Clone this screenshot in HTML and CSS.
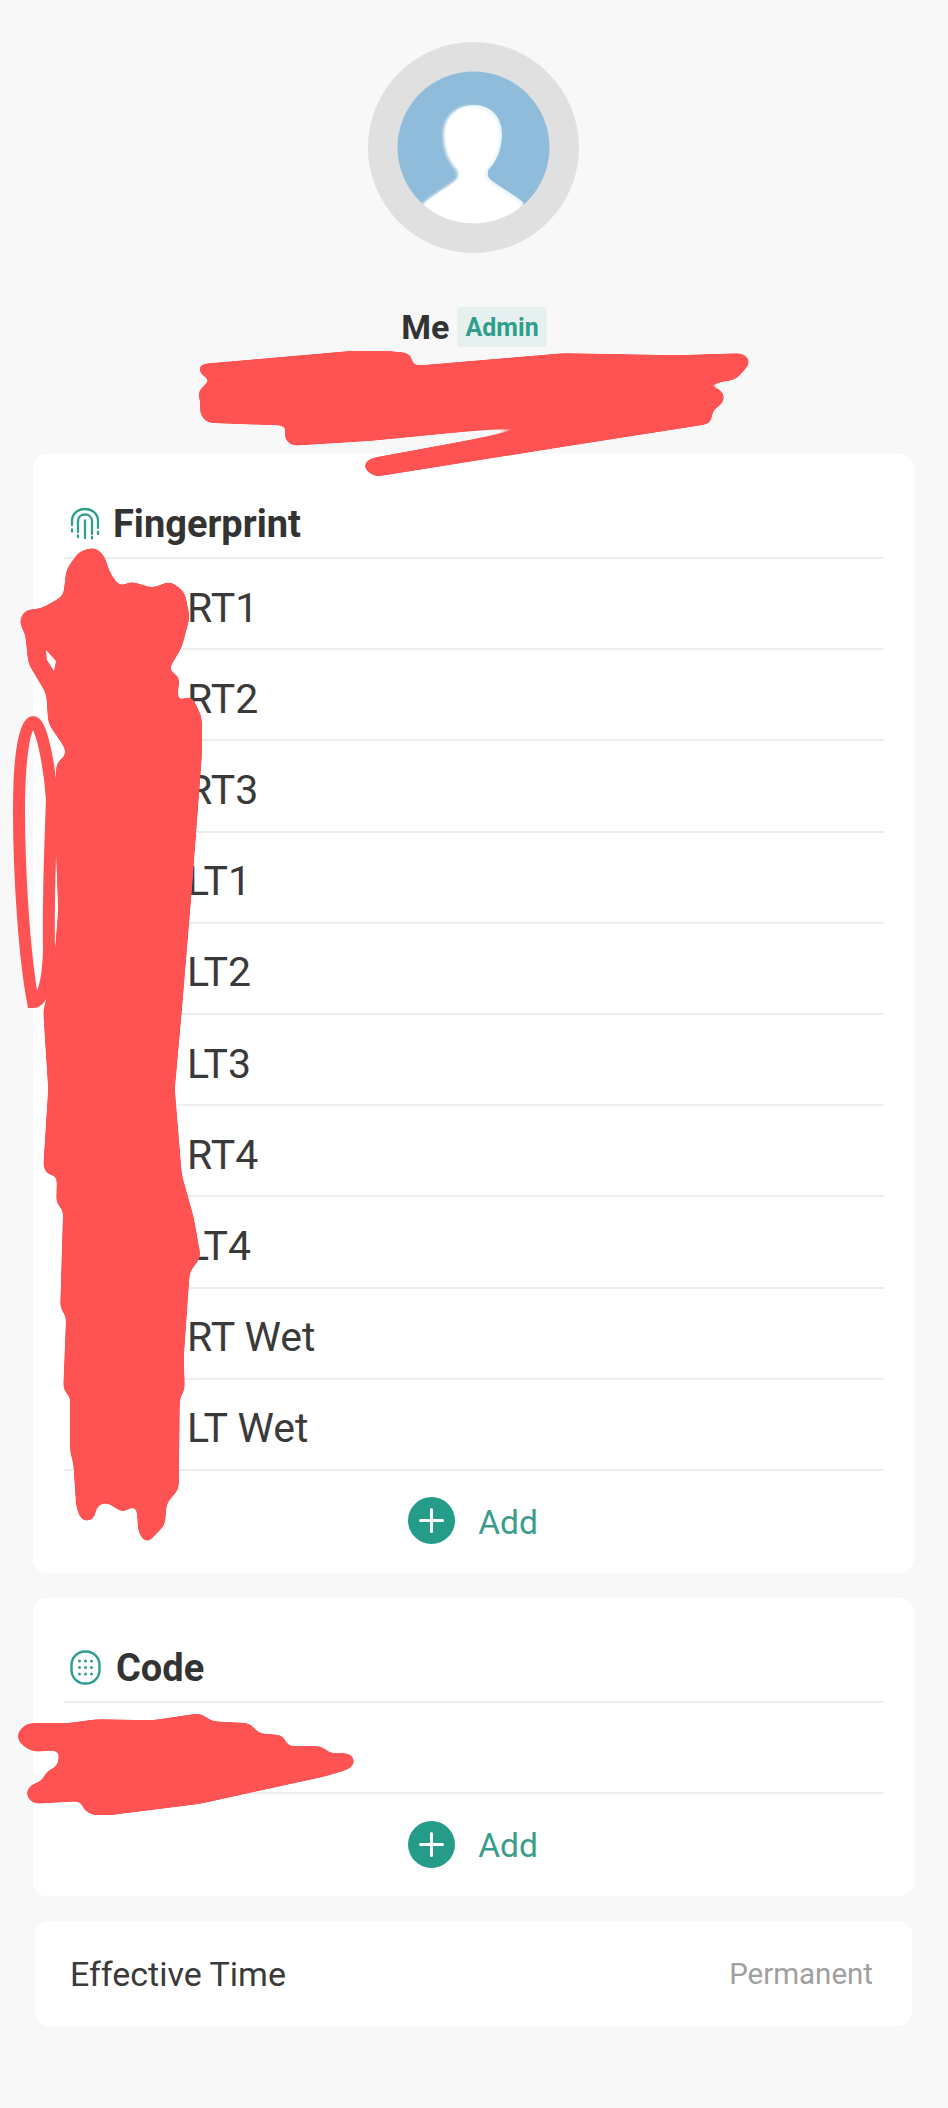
FILE: index.html
```html
<!DOCTYPE html>
<html lang="en">
<head>
    <meta charset="UTF-8">
    <meta name="viewport" content="width=device-width, initial-scale=1.0">
    <title>User Details</title>
    <link rel="stylesheet" href="styles.css">
</head>
<body>
    <div class="profile">
        <svg class="avatar" width="211" height="211" viewBox="0 0 211 211">
            <defs>
                <clipPath id="avatarClip"><circle cx="105.5" cy="105.5" r="76"/></clipPath>
                <filter id="soft"><feGaussianBlur stdDeviation="1.6"/></filter>
            </defs>
            <circle cx="105.5" cy="105.5" r="105.5" fill="#e0e0e0"/>
            <circle cx="105.5" cy="105.5" r="76" fill="#8fbcdb"/>
            <g clip-path="url(#avatarClip)">
                <path fill="#e4f2f5" d="M106 63C122 63 134 74 134 92C134 108 128 120 120 128V134C122 140 140 148 155 160L160 200H52L57 161C72 148 90 140 92 134V128C84 120 78 108 78 92C78 74 90 63 106 63Z"/>
                <path fill="#fff" filter="url(#soft)" transform="translate(-2.5 1)" d="M106 63C122 63 134 74 134 92C134 108 128 120 120 128V134C122 140 140 148 155 160L160 200H52L57 161C72 148 90 140 92 134V128C84 120 78 108 78 92C78 74 90 63 106 63Z"/>
            </g>
        </svg>
        <div class="name-line">
            <span class="name">Me</span>
            <span class="role-tag">Admin</span>
        </div>
    </div>

    <section class="card card-fingerprint">
        <div class="card-title">
            <svg class="title-icon" width="30" height="34" viewBox="0 0 30 34" fill="none" stroke="#2f9e8c" stroke-width="2.300" stroke-linecap="round">
                <path d="M2 18V14C2 6.500 8 2 15 2S28 6.500 28 14V21"/>
                <path d="M8 25V14C8 10 11 7.500 15 7.500S22 10 22 14V27"/>
                <path d="M15 13.500V31"/>
                <path d="M2 22.500V24.500M28 25V27M22 30V31.500M8 28.500V30"/>
            </svg>
            <span>Fingerprint</span>
        </div>
        <div class="row">RT1</div>
        <div class="row">RT2</div>
        <div class="row">RT3</div>
        <div class="row">LT1</div>
        <div class="row">LT2</div>
        <div class="row">LT3</div>
        <div class="row">RT4</div>
        <div class="row">LT4</div>
        <div class="row">RT Wet</div>
        <div class="row">LT Wet</div>
        <div class="add-row">
            <span class="add-circle"></span>
            <span class="add-text">Add</span>
        </div>
    </section>

    <section class="card card-code">
        <div class="card-title">
            <svg class="title-icon" width="31" height="35" viewBox="0 0 31 35">
                <rect x="1.500" y="1.500" width="28" height="32" rx="13.500" fill="none" stroke="#2f9e8c" stroke-width="2.400"/>
                <g fill="#2f9e8c">
                    <circle cx="9.500" cy="11" r="1.500"/><circle cx="15.500" cy="11" r="1.500"/><circle cx="21.500" cy="11" r="1.500"/>
                    <circle cx="9.500" cy="17.500" r="1.500"/><circle cx="15.500" cy="17.500" r="1.500"/><circle cx="21.500" cy="17.500" r="1.500"/>
                    <circle cx="9.500" cy="24" r="1.500"/><circle cx="15.500" cy="24" r="1.500"/><circle cx="21.500" cy="24" r="1.500"/>
                </g>
            </svg>
            <span>Code</span>
        </div>
        <div class="row"></div>
        <div class="add-row">
            <span class="add-circle"></span>
            <span class="add-text">Add</span>
        </div>
    </section>

    <section class="card card-time">
        <span class="time-label">Effective Time</span>
        <span class="time-value">Permanent</span>
    </section>

    <!-- red marker scribbles on top of the screenshot -->
    <svg class="scribbles" width="948" height="2108" viewBox="0 0 948 2108">
        <defs>
            <filter id="marker" x="0" y="0" width="100%" height="100%">
                <feGaussianBlur stdDeviation="4"/>
                <feColorMatrix values="1 0 0 0 0  0 1 0 0 0  0 0 1 0 0  0 0 0 16 -7"/>
            </filter>
        </defs>
        <g fill="#ff5252" stroke="#ff5252" stroke-width="3" stroke-linejoin="round" fill-rule="evenodd" filter="url(#marker)">
            <path d="M199 366L371 351L410 355V368L563 355L677 357L743 355L749 362L735 378L674 387L721 391L723 401L710 410V422L563 445L375 475L364 466L371 460L578 422L524 424L371 439L291 444L285 435L293 424L207 421L201 412L203 403L199 393L207 385L222 378L203 375Z"/>
            <path d="M68 570L80 553L95 549L103 557L108 573L120 590L130 583L153 590L170 583L183 593L188 617L180 647L165 672L162 693L168 673L178 677L170 740L180 703L190 697L200 717V757L190 890L180 1011L173 1089L180 1175L192 1218L199 1257L188 1271L182 1357L183 1391L178 1396L177 1489L165 1502L163 1525L155 1532L147 1542L140 1532L138 1500L123 1511L107 1500L95 1504L93 1518L83 1520L78 1507L75 1461L72 1454V1393L65 1391L68 1314L62 1309L65 1207L58 1204L59 1168L50 1175L45 1168L50 1089L45 1011L55 973L60 910L58 857L58 763L68 757L67 748L50 723L48 693L30 663L27 633L21 623L25 612L42 610L65 597Z"/>
            <path d="M18 1735L27 1725H67L97 1721L153 1722L200 1715L211 1723L250 1725L257 1735L283 1737L285 1748H322L328 1755H350L354 1763L347 1768L323 1775L200 1802L97 1815L83 1808L87 1799L33 1802L27 1793L32 1786L43 1783L48 1772L60 1768V1757L65 1748L33 1750L22 1743Z"/>
        </g>
        <path fill="#fff" d="M46 650L56 661L54 671L47 660Z"/>
        <path fill="none" stroke="#ff5252" stroke-width="12" d="M33 722C24 722 19 760 19 810C19 880 25 960 33 1002C42 1002 48 985 49 950C48 900 50 850 52 800C50 770 42 722 33 722Z"/>
    </svg>
</body>
</html>
```

FILE: styles.css
```css
body {
    font-family: 'Roboto', sans-serif;
    background: #f8f8f8;
    color: #333;
    margin: 0;
    height: 2108px;
    position: relative;
    overflow: hidden;
}
.profile {
    display: flex;
    flex-direction: column;
    align-items: center;
    padding-top: 42px;
    height: 454px;
    box-sizing: border-box;
}
.avatar {
    display: block;
    margin-left: -1px;
}
.name-line {
    display: flex;
    align-items: center;
    gap: 8px;
    margin-top: 54px;
    height: 40px;
}
.name {
    font-size: 34px;
    font-weight: 700;
}
.role-tag {
    background: #e6f1ef;
    color: #2f9e8c;
    font-size: 25px;
    font-weight: 700;
    padding: 0 8px;
    height: 40px;
    line-height: 42px;
    border-radius: 4px;
}
.card {
    background: #fff;
    border-radius: 14px;
    margin: 0 34px 25px 33px;
    padding: 0 30px 0 31px;
}
.card-fingerprint {
    height: 1119px;
}
.card-code {
    height: 298px;
}
.card-title {
    display: flex;
    align-items: center;
    height: 105px;
    box-sizing: border-box;
    border-bottom: 2px solid #eee;
    font-size: 38px;
    font-weight: 700;
    gap: 13px;
    padding-left: 6px;
    padding-top: 36px;
}
.card-code .card-title {
    gap: 15px;
}
.row {
    height: 91.200px;
    box-sizing: border-box;
    border-bottom: 2px solid #eee;
    display: flex;
    align-items: center;
    font-size: 41px;
    color: #3a3a3a;
    padding-left: 123px;
    padding-top: 8px;
}
.add-row {
    display: flex;
    align-items: center;
    justify-content: center;
    gap: 23px;
    height: 100px;
    padding-right: 2px;
}
.add-circle {
    width: 47px;
    height: 47px;
    border-radius: 50%;
    background: #259b8a;
    position: relative;
}
.add-circle::before,
.add-circle::after {
    content: "";
    position: absolute;
    background: #fff;
    border-radius: 2px;
}
.add-circle::before {
    left: 11px;
    top: 22px;
    width: 25px;
    height: 3px;
}
.add-circle::after {
    left: 22px;
    top: 11px;
    width: 3px;
    height: 25px;
}
.add-text {
    color: #3a9c8c;
    font-size: 33.500px;
    padding-top: 3px;
}
.card-time {
    display: flex;
    align-items: center;
    justify-content: space-between;
    height: 105px;
    margin: 0 36px 0 35px;
    padding: 0 39px 0 35px;
}
.time-label {
    font-size: 34px;
    color: #3a3a3a;
}
.time-value {
    font-size: 29.500px;
    color: #a0a0a0;
}
.scribbles {
    position: absolute;
    left: 0;
    top: 0;
    pointer-events: none;
}
```
